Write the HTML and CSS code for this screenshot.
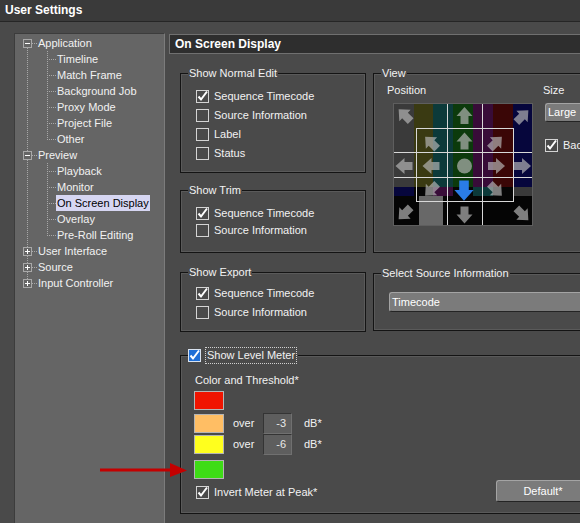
FILE: index.html
```html
<!DOCTYPE html>
<html>
<head>
<meta charset="utf-8">
<title>User Settings</title>
<link rel="stylesheet" href="styles.css">
</head>
<body>
<div class="titlebar">User Settings</div>
<div class="main">
  <div class="tree">
    <div class="root">
      <div class="node">
        <div class="row parent"><svg class="toggle" viewBox="0 0 9 9"><rect x=".5" y=".5" width="8" height="8" fill="#656565" stroke="#a8a8a8"/><path d="M2 4.5h5" stroke="#fff"/></svg><span class="hconn short"></span><span class="label">Application</span></div>
        <div class="children">
          <div class="row child"><span class="hconn"></span><span class="label">Timeline</span></div>
          <div class="row child"><span class="hconn"></span><span class="label">Match Frame</span></div>
          <div class="row child"><span class="hconn"></span><span class="label">Background Job</span></div>
          <div class="row child"><span class="hconn"></span><span class="label">Proxy Mode</span></div>
          <div class="row child"><span class="hconn"></span><span class="label">Project File</span></div>
          <div class="row child"><span class="hconn"></span><span class="label">Other</span></div>
        </div>
      </div>
      <div class="node">
        <div class="row parent"><svg class="toggle" viewBox="0 0 9 9"><rect x=".5" y=".5" width="8" height="8" fill="#656565" stroke="#a8a8a8"/><path d="M2 4.5h5" stroke="#fff"/></svg><span class="hconn short"></span><span class="label">Preview</span></div>
        <div class="children">
          <div class="row child"><span class="hconn"></span><span class="label">Playback</span></div>
          <div class="row child"><span class="hconn"></span><span class="label">Monitor</span></div>
          <div class="row child"><span class="hconn"></span><span class="label selected">On Screen Display</span></div>
          <div class="row child"><span class="hconn"></span><span class="label">Overlay</span></div>
          <div class="row child"><span class="hconn"></span><span class="label">Pre-Roll Editing</span></div>
        </div>
      </div>
      <div class="node">
        <div class="row parent"><svg class="toggle" viewBox="0 0 9 9"><rect x=".5" y=".5" width="8" height="8" fill="#656565" stroke="#a8a8a8"/><path d="M2 4.5h5M4.5 2v5" stroke="#fff"/></svg><span class="hconn short"></span><span class="label">User Interface</span></div>
      </div>
      <div class="node">
        <div class="row parent"><svg class="toggle" viewBox="0 0 9 9"><rect x=".5" y=".5" width="8" height="8" fill="#656565" stroke="#a8a8a8"/><path d="M2 4.5h5M4.5 2v5" stroke="#fff"/></svg><span class="hconn short"></span><span class="label">Source</span></div>
      </div>
      <div class="node">
        <div class="row parent"><svg class="toggle" viewBox="0 0 9 9"><rect x=".5" y=".5" width="8" height="8" fill="#656565" stroke="#a8a8a8"/><path d="M2 4.5h5M4.5 2v5" stroke="#fff"/></svg><span class="hconn short"></span><span class="label">Input Controller</span></div>
      </div>
    </div>
  </div>

  <div class="content">
    <div class="panel-header">On Screen Display</div>
    <div class="panel-body">
      <div class="columns">
        <div class="col-left">
          <div class="group g-normal">
            <div class="group-title">Show Normal Edit</div>
            <ul class="checks">
              <li><svg class="cb" viewBox="0 0 13 13"><rect x=".5" y=".5" width="12" height="12" fill="none" stroke="#d4d4d4"/><path d="M2.5 6.5L5 9.5L11 1.5" fill="none" stroke="#fff" stroke-width="2"/></svg><span>Sequence Timecode</span></li>
              <li><svg class="cb" viewBox="0 0 13 13"><rect x=".5" y=".5" width="12" height="12" fill="none" stroke="#d4d4d4"/></svg><span>Source Information</span></li>
              <li><svg class="cb" viewBox="0 0 13 13"><rect x=".5" y=".5" width="12" height="12" fill="none" stroke="#d4d4d4"/></svg><span>Label</span></li>
              <li><svg class="cb" viewBox="0 0 13 13"><rect x=".5" y=".5" width="12" height="12" fill="none" stroke="#d4d4d4"/></svg><span>Status</span></li>
            </ul>
          </div>
          <div class="group g-trim">
            <div class="group-title">Show Trim</div>
            <ul class="checks">
              <li><svg class="cb" viewBox="0 0 13 13"><rect x=".5" y=".5" width="12" height="12" fill="none" stroke="#d4d4d4"/><path d="M2.5 6.5L5 9.5L11 1.5" fill="none" stroke="#fff" stroke-width="2"/></svg><span>Sequence Timecode</span></li>
              <li><svg class="cb" viewBox="0 0 13 13"><rect x=".5" y=".5" width="12" height="12" fill="none" stroke="#d4d4d4"/></svg><span>Source Information</span></li>
            </ul>
          </div>
          <div class="group g-export">
            <div class="group-title">Show Export</div>
            <ul class="checks">
              <li><svg class="cb" viewBox="0 0 13 13"><rect x=".5" y=".5" width="12" height="12" fill="none" stroke="#d4d4d4"/><path d="M2.5 6.5L5 9.5L11 1.5" fill="none" stroke="#fff" stroke-width="2"/></svg><span>Sequence Timecode</span></li>
              <li><svg class="cb" viewBox="0 0 13 13"><rect x=".5" y=".5" width="12" height="12" fill="none" stroke="#d4d4d4"/></svg><span>Source Information</span></li>
            </ul>
          </div>
        </div>

        <div class="col-right">
          <div class="group g-view">
            <div class="group-title">View</div>
            <div class="view-body">
              <div class="pos-col">
                <div class="field-label">Position</div>
                <svg class="posgrid" width="140" height="123" viewBox="0 0 140 123">
                  <defs><path id="arr" d="M0 -9L8 0L4 0L4 8L-4 8L-4 0L-8 0Z"/></defs>
                  <rect width="140" height="123" fill="#050505"/>
                  <rect x="0" y="0" width="21" height="84" fill="#3a3a3a"/>
                  <rect x="21" y="0" width="19" height="84" fill="#3a3a12"/>
                  <rect x="40" y="0" width="20" height="84" fill="#0c3a3a"/>
                  <rect x="60" y="0" width="20" height="84" fill="#0c3a0c"/>
                  <rect x="80" y="0" width="20" height="84" fill="#380c38"/>
                  <rect x="100" y="0" width="20" height="84" fill="#3a0606"/>
                  <rect x="120" y="0" width="20" height="84" fill="#06063c"/>
                  <rect x="0" y="84" width="21" height="9" fill="#06063c"/>
                  <rect x="40" y="84" width="20" height="9" fill="#380c38"/>
                  <rect x="80" y="84" width="20" height="9" fill="#0c3a3a"/>
                  <rect x="120" y="84" width="20" height="9" fill="#3a3a3a"/>
                  <rect x="26" y="93" width="24" height="30" fill="#686868"/>
                  <g fill="none" stroke="#d8d8d8">
                    <path d="M54.5 0V123M89.5 0V123M0 49.5H140M0 74.5H140"/>
                    <rect x="23.5" y="25.5" width="97" height="73"/>
                  </g>
                  <g fill="#b8b8b8" fill-opacity="0.68">
                    <use href="#arr" transform="translate(12 12.5) rotate(-45)"/>
                    <use href="#arr" transform="translate(71.5 13)"/>
                    <use href="#arr" transform="translate(129 13.5) rotate(45)"/>
                    <use href="#arr" transform="translate(11.5 63) rotate(-90)"/>
                    <use href="#arr" transform="translate(129 63) rotate(90)"/>
                    <use href="#arr" transform="translate(12 110) rotate(-135)"/>
                    <use href="#arr" transform="translate(71.5 111.5) rotate(180)"/>
                    <use href="#arr" transform="translate(129 111) rotate(135)"/>
                    <use href="#arr" transform="translate(38.5 40) rotate(-45)"/>
                    <use href="#arr" transform="translate(71.5 38.5)"/>
                    <use href="#arr" transform="translate(102.5 40) rotate(45)"/>
                    <use href="#arr" transform="translate(38.5 63) rotate(-90)"/>
                    <circle cx="71.5" cy="63" r="7.5"/>
                    <use href="#arr" transform="translate(103 63) rotate(90)"/>
                    <use href="#arr" transform="translate(38.5 86.5) rotate(-135)"/>
                    <use href="#arr" transform="translate(102.5 86.5) rotate(135)"/>
                  </g>
                  <use href="#arr" fill="#2a7ce6" transform="translate(71 87) rotate(180) scale(1.2)"/>
                  <rect x=".5" y=".5" width="139" height="122" fill="none" stroke="#5e5e5e"/>
                </svg>
              </div>
              <div class="size-col">
                <div class="field-label">Size</div>
                <div class="dropdown size-drop">Large</div>
                <div class="check-inline bg-check"><svg class="cb" viewBox="0 0 13 13"><rect x=".5" y=".5" width="12" height="12" fill="none" stroke="#d4d4d4"/><path d="M2.5 6.5L5 9.5L11 1.5" fill="none" stroke="#fff" stroke-width="2"/></svg><span>Background</span></div>
              </div>
            </div>
          </div>
          <div class="group g-source">
            <div class="group-title">Select Source Information</div>
            <div class="source-body">
              <div class="dropdown source-drop">Timecode</div>
            </div>
          </div>
        </div>
      </div>

      <div class="group g-level">
        <div class="level-title">
          <svg class="cb" viewBox="0 0 13 13"><rect x=".5" y=".5" width="12" height="12" fill="#1f6fd6" stroke="#d8e2f0"/><path d="M2.5 6.5L5 9.5L11 1.5" fill="none" stroke="#fff" stroke-width="2"/></svg>
          <span class="focus">Show Level Meter</span>
        </div>
        <div class="level-body">
          <div class="ct-label">Color and Threshold*</div>
          <div class="meter-row m-first"><span class="swatch sw-red"></span></div>
          <div class="meter-row m-second"><span class="swatch sw-orange"></span><span class="over">over</span><span class="num">-3</span><span class="db">dB*</span></div>
          <div class="meter-row"><span class="swatch sw-yellow"></span><span class="over">over</span><span class="num">-6</span><span class="db">dB*</span></div>
          <div class="meter-row m-last"><span class="swatch sw-green"></span></div>
          <div class="bottom-row">
            <div class="check-inline invert"><svg class="cb" viewBox="0 0 13 13"><rect x=".5" y=".5" width="12" height="12" fill="none" stroke="#d4d4d4"/><path d="M2.5 6.5L5 9.5L11 1.5" fill="none" stroke="#fff" stroke-width="2"/></svg><span>Invert Meter at Peak*</span></div>
            <div class="btn">Default*</div>
          </div>
        </div>
      </div>
    </div>
  </div>
</div>
<svg class="annot" width="88" height="16" viewBox="0 0 88 16"><path d="M0 8H72" stroke="#c40000" stroke-width="3"/><path d="M70 1L87 8.5L70 15Z" fill="#c40000"/></svg>
</body>
</html>
```

FILE: styles.css
```css
* { box-sizing: border-box; margin: 0; padding: 0; }
html, body { width: 580px; height: 523px; overflow: hidden; }
body {
  position: relative;
  background: #4a4a4a;
  color: #f2f2f2;
  font-family: "Liberation Sans", Arial, sans-serif;
  font-size: 11px;
  line-height: 13px;
}

.titlebar {
  height: 22px;
  background: #3a3a3a;
  border-bottom: 1px solid #262626;
  padding-left: 5px;
  font-weight: bold;
  font-size: 12px;
  line-height: 21px;
  color: #fff;
}

.main { display: flex; padding: 11px 0 0 14px; }

/* tree */
.tree {
  flex: none;
  width: 151px;
  height: 500px;
  background: #656565;
  border-top: 1px solid #3c3c3c;
  border-left: 1px solid #3c3c3c;
  border-right: 1px solid #7c7c7c;
  padding-top: 1px;
}
.root {
  background: repeating-linear-gradient(to bottom, #a8a8a8 0 1px, transparent 1px 2px) 12px 13px / 1px calc(100% - 21px) no-repeat;
}
.children {
  background: repeating-linear-gradient(to bottom, #a8a8a8 0 1px, transparent 1px 2px) 32px 0 / 1px calc(100% - 8px) no-repeat;
}
.row { display: flex; align-items: center; height: 16px; white-space: nowrap; }
.row.parent { padding-left: 8px; }
.row.child { padding-left: 32px; }
.toggle { display: block; flex: none; width: 9px; height: 9px; }
.hconn {
  flex: none;
  width: 9px;
  height: 1px;
  background: repeating-linear-gradient(to right, #a8a8a8 0 1px, transparent 1px 2px);
}
.hconn.short { width: 6px; }
.label { padding: 0 1px; line-height: 16px; }
.row.parent .label { padding: 0; }
.label.selected { background: #d6d6f2; color: #000; }

/* content */
.content { flex: none; width: 430px; margin-left: 4px; padding-top: 1px; }
.panel-header {
  height: 20px;
  border: 1px solid #707070;
  background: #2e2e2e;
  padding-left: 5px;
  font-weight: bold;
  font-size: 12px;
  line-height: 18px;
  color: #fff;
}
.panel-body { padding: 19px 0 0 11px; }
.columns { display: flex; align-items: flex-start; }
.col-left { flex: none; width: 186px; display: flex; flex-direction: column; }
.col-right { flex: none; width: 240px; margin-left: 7px; display: flex; flex-direction: column; }

.group {
  border: 1px solid #141414;
  box-shadow: inset 0 0 0 1px #5a5a5a;
}
.group-title {
  width: fit-content;
  margin: -7px 0 0 7px;
  padding: 0 1px;
  background: #4a4a4a;
  line-height: 13px;
  white-space: nowrap;
}
.g-normal { height: 100px; }
.g-trim { height: 63px; margin-top: 17px; }
.g-export { height: 60px; margin-top: 19px; }
.g-view { height: 180px; }
.g-source { height: 58px; margin-top: 20px; }
.g-level { width: 420px; height: 159px; margin-top: 23px; }

.checks { list-style: none; padding: 7px 0 0 15px; }
.checks li { display: flex; align-items: center; gap: 5px; height: 19px; white-space: nowrap; }
.g-trim .checks { padding-top: 8px; }
.g-trim .checks li { height: 17px; }
.g-export .checks { padding-top: 5px; }
.cb { display: block; flex: none; width: 13px; height: 13px; }

.check-inline { display: flex; align-items: center; gap: 5px; white-space: nowrap; }

/* view */
.view-body { display: flex; padding: 4px 0 0 13px; }
.pos-col { flex: none; width: 146px; display: flex; flex-direction: column; }
.posgrid { display: block; margin: 6px 0 0 6px; }
.size-col { margin-left: 10px; display: flex; flex-direction: column; }
.field-label { line-height: 13px; }

.dropdown {
  background: #7b7b7b;
  border: 1px solid;
  border-color: #a4a4a4 #3a3a3a #242424 #a4a4a4;
  border-radius: 3px;
  padding-left: 2px;
  color: #fff;
  white-space: nowrap;
}
.size-drop { width: 70px; height: 19px; margin: 6px 0 0 2px; line-height: 17px; }
.bg-check { margin: 17px 0 0 2px; height: 13px; }
.source-body { padding: 12px 0 0 15px; }
.source-drop { width: 220px; height: 20px; line-height: 18px; }

/* level meter */
.level-title {
  display: flex;
  align-items: center;
  gap: 4px;
  width: fit-content;
  height: 17px;
  margin: -9px 0 0 7px;
  padding-right: 1px;
  background: #4a4a4a;
}
.level-title .focus { border: 1px dotted #d0d0d0; padding: 0 1px; line-height: 15px; white-space: nowrap; }
.level-body { padding: 10px 9px 0 14px; }
.ct-label { line-height: 13px; }
.meter-row { display: flex; align-items: center; height: 21px; }
.meter-row.m-first { height: 19px; margin-top: 4px; }
.meter-row.m-second { margin-top: 3px; }
.meter-row.m-last { height: 19px; margin-top: 5px; }
.swatch { flex: none; width: 30px; height: 19px; margin-left: -1px; border: 1px solid #b4b4b4; }
.sw-red { background: #f01400; }
.sw-orange { background: #ffbe64; }
.sw-yellow { background: #ffff1e; }
.sw-green { background: #3edc16; }
.over { flex: none; width: 30px; margin-left: 9px; }
.num {
  flex: none;
  width: 29px;
  height: 21px;
  background: #5e5e5e;
  border: 1px solid;
  border-color: #343434 #707070 #707070 #343434;
  text-align: right;
  padding-right: 5px;
  line-height: 19px;
  color: #e8e8e8;
}
.db { margin-left: 12px; }
.bottom-row { display: flex; align-items: center; height: 22px; margin-top: 1px; }
.invert { margin-left: 1px; margin-top: 2px; }
.btn {
  margin-left: auto;
  width: 94px;
  height: 22px;
  background: #7b7b7b;
  border: 1px solid;
  border-color: #a4a4a4 #3a3a3a #242424 #a4a4a4;
  border-radius: 3px;
  text-align: center;
  line-height: 20px;
  color: #fff;
}

/* annotation arrow drawn over the screenshot */
.annot { position: absolute; left: 100px; top: 462px; }
```
